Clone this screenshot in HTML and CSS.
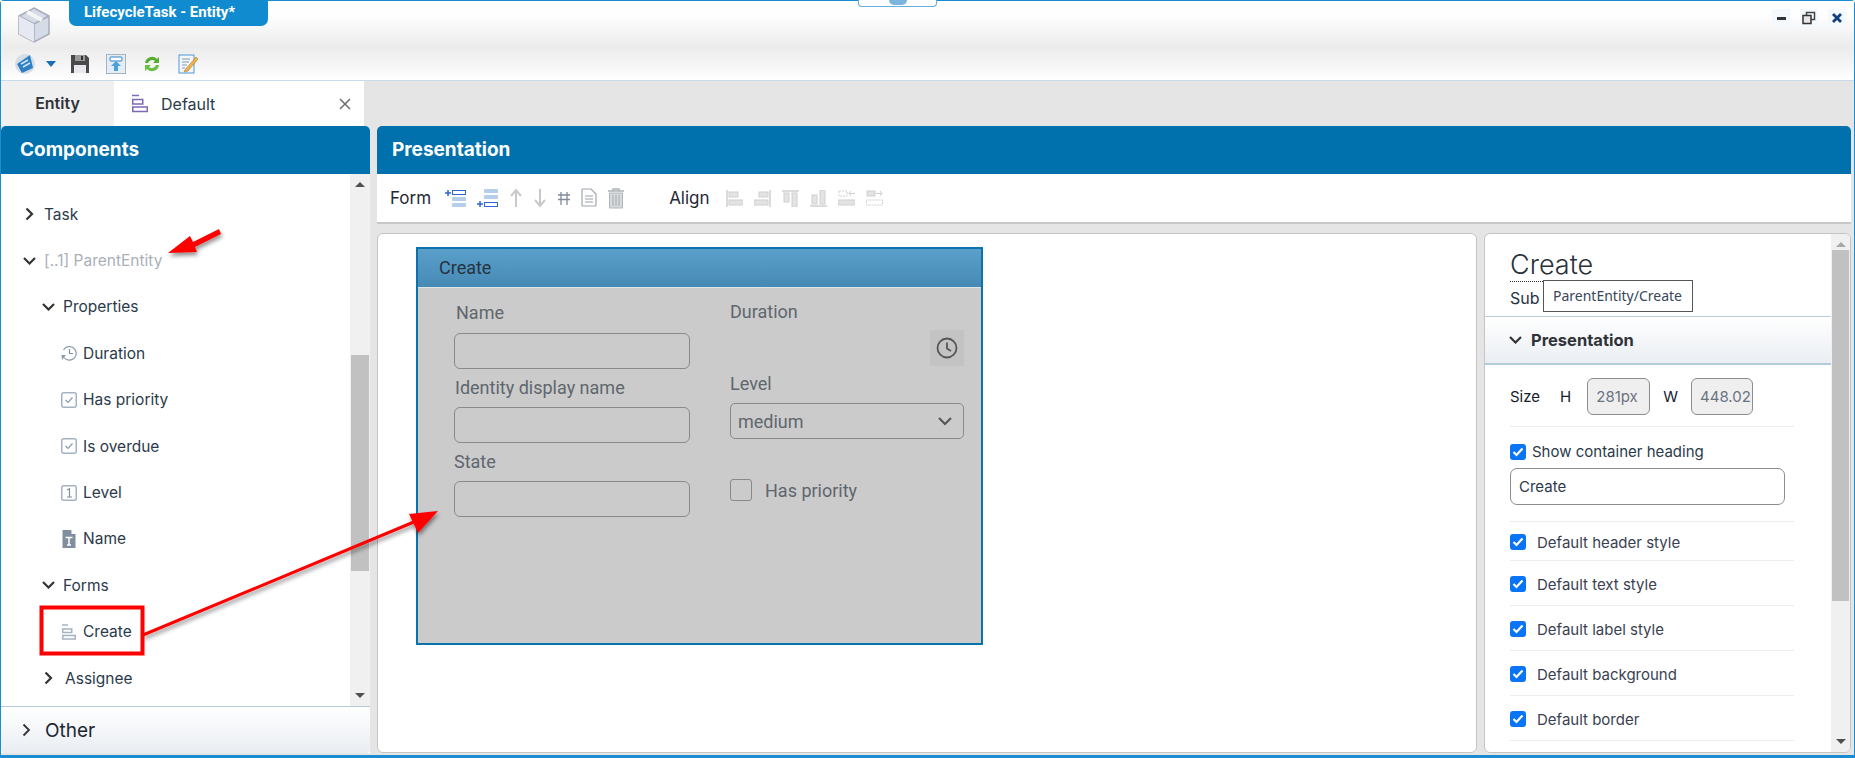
FILE: index.html
```html
<!DOCTYPE html>
<html lang="en">
<head>
    <meta charset="UTF-8">
    <title>LifecycleTask - Entity</title>
    <link rel="stylesheet" href="styles.css">
</head>
<body>
<div class="window">

    <!-- Title bar -->
    <div class="titlebar">
        <div class="title-row">
            <svg class="app-logo" width="34" height="38" viewBox="0 0 34 38">
                <path d="M17 2 L32 10 L32 28 L17 36 L2 28 L2 10 Z" fill="#d5dce8" stroke="#a7acb8" stroke-width="1.5"/>
                <path d="M2 10 L17 18 L32 10 M17 18 L17 36" fill="none" stroke="#a7acb8" stroke-width="1.5"/>
                <path d="M2 10 L17 18 L17 36 L2 28 Z" fill="#e6e9f2"/>
                <path d="M10 6 L25 14" stroke="#f5f5f5" stroke-width="4"/>
            </svg>
            <div class="title-tab">LifecycleTask - Entity*</div>
            <div class="top-handle"><span></span></div>
            <div class="window-btns">
                <span class="win-btn"><svg width="12" height="12" viewBox="0 0 12 12"><rect x="2" y="5" width="9" height="3" fill="#333"/></svg></span>
                <span class="win-btn"><svg width="14" height="14" viewBox="0 0 14 14"><rect x="4.5" y="1.5" width="8" height="7" fill="none" stroke="#444" stroke-width="1.5"/><rect x="1" y="4.5" width="8" height="8" fill="#e8e8e8" stroke="#333" stroke-width="1.5"/></svg></span>
                <span class="win-btn"><svg width="12" height="12" viewBox="0 0 12 12"><path d="M2 2 L10 10 M10 2 L2 10" stroke="#123f80" stroke-width="2.8"/></svg></span>
            </div>
        </div>
        <div class="quick-tools">
            <svg class="tool-sphere" width="22" height="22" viewBox="0 0 22 22"><circle cx="11" cy="11" r="10" fill="#d4dde6"/><path d="M3 11 L16 2 L19 15 L8 20 Z" fill="#2f7fc4"/><path d="M7 11 L14 7 M9 14 L16 10" stroke="#cfe4f5" stroke-width="1.5"/></svg>
            <svg class="tool-caret" width="10" height="6" viewBox="0 0 10 6"><path d="M0 0 H10 L5 6 Z" fill="#1a6fb5"/></svg>
            <svg width="20" height="20" viewBox="0 0 20 20"><path d="M1 1 H16 L19 4 V19 H1 Z" fill="#4a4a4a"/><rect x="5" y="1" width="10" height="6" fill="#9a9a9a"/><rect x="11" y="2" width="2" height="4" fill="#333"/><rect x="4" y="11" width="12" height="8" fill="#e8e8ee"/></svg>
            <svg width="20" height="20" viewBox="0 0 20 20"><rect x="0.5" y="0.5" width="19" height="19" fill="#e4edf5" stroke="#a9b3bd"/><rect x="4" y="3" width="12" height="4" rx="1" fill="#fff" stroke="#2c83c9"/><path d="M10 7 L15 12 H12 V17 H8 V12 H5 Z" fill="#49a0de"/></svg>
            <svg width="20" height="20" viewBox="0 0 20 20"><path d="M3 9 A7 7 0 0 1 15 5 L17 3 V9 H11 L13 7 A4.500 4.500 0 0 0 6 9 Z" fill="#57ad32"/><path d="M17 11 A7 7 0 0 1 5 15 L3 17 V11 H9 L7 13 A4.500 4.500 0 0 0 14 11 Z" fill="#6cc043"/></svg>
            <svg width="21" height="20" viewBox="0 0 21 20"><rect x="1" y="1" width="15" height="18" fill="#f2f7fc" stroke="#4d9ad6"/><path d="M4 5 H12 M4 8 H11 M4 11 H9 M4 14 H7" stroke="#8a97a5"/><path d="M7 16 L18 3 L20 5 L10 17 L6 18 Z" fill="#eeb44b" stroke="#b5762a" stroke-width="0.6"/></svg>
        </div>
    </div>

    <!-- Tabs -->
    <div class="tabs">
        <div class="tab-entity">Entity</div>
        <div class="tab-default">
            <svg class="form-icon" width="16" height="19" viewBox="0 0 16 19"><g fill="none" stroke="#7f68b5" stroke-width="1.5"><path d="M0 1.500 H7"/><rect x="0.750" y="5.500" width="10" height="4.500"/><rect x="0.750" y="13" width="14.500" height="4.500"/></g></svg>
            <span>Default</span>
            <svg class="tab-close" width="12" height="12" viewBox="0 0 12 12"><path d="M1 1 L11 11 M11 1 L1 11" stroke="#6d6d6d" stroke-width="1.500"/></svg>
        </div>
    </div>

    <div class="workspace">

        <!-- Components panel -->
        <div class="components">
            <div class="panel-head">Components</div>
            <div class="tree-wrap">
                <div class="tree">
                    <div class="tree-row lvl-0"><svg class="chev" width="9" height="14" viewBox="0 0 9 14"><path d="M1.500 1.500 L7 7 L1.500 12.500" fill="none" stroke="#333" stroke-width="2.200"/></svg>Task</div>
                    <div class="tree-row lvl-0 muted"><svg class="chev-down" width="13" height="8" viewBox="0 0 13 8"><path d="M1 1 L6.500 6.500 L12 1" fill="none" stroke="#333" stroke-width="2.200"/></svg>[..1] ParentEntity</div>
                    <div class="tree-row lvl-1"><svg class="chev-down" width="13" height="8" viewBox="0 0 13 8"><path d="M1 1 L6.500 6.500 L12 1" fill="none" stroke="#333" stroke-width="2.200"/></svg>Properties</div>
                    <div class="tree-row lvl-2">
                        <svg class="prop-icon" width="16" height="16" viewBox="0 0 16 16"><path d="M2.500 5 A6.800 6.800 0 1 1 3 12.500" fill="none" stroke="#8b9bab" stroke-width="1.200"/><path d="M8.500 4 V8.500 H12" fill="none" stroke="#7f8f9f" stroke-width="1.200"/><path d="M0.500 10 H5 L1 15 Z" fill="#8b9bab"/></svg>
                        Duration</div>
                    <div class="tree-row lvl-2">
                        <svg class="prop-icon" width="16" height="16" viewBox="0 0 16 16"><rect x="0.750" y="0.750" width="14.500" height="14.500" rx="2" fill="none" stroke="#a3b3c2" stroke-width="1.500"/><path d="M4.500 8 L7 10.500 L11.500 5.500" fill="none" stroke="#8b9bab" stroke-width="1.200"/></svg>
                        Has priority</div>
                    <div class="tree-row lvl-2">
                        <svg class="prop-icon" width="16" height="16" viewBox="0 0 16 16"><rect x="0.750" y="0.750" width="14.500" height="14.500" rx="2" fill="none" stroke="#a3b3c2" stroke-width="1.500"/><path d="M4.500 8 L7 10.500 L11.500 5.500" fill="none" stroke="#8b9bab" stroke-width="1.200"/></svg>
                        Is overdue</div>
                    <div class="tree-row lvl-2">
                        <svg class="prop-icon" width="16" height="16" viewBox="0 0 16 16"><rect x="0.750" y="0.750" width="14.500" height="14.500" rx="2" fill="none" stroke="#a3b3c2" stroke-width="1.500"/><path d="M6 5 L8.500 3.800 V12 M6 12 H11" fill="none" stroke="#7f8f9f" stroke-width="1.200"/></svg>
                        Level</div>
                    <div class="tree-row lvl-2">
                        <svg class="prop-icon" width="14" height="18" viewBox="0 0 14 18"><path d="M0.500 0 H9 L13.500 4.500 V18 H0.500 Z" fill="#7f8f9f"/><path d="M9.500 0 L13.500 4 H9.500 Z" fill="#fff"/><path d="M3.500 7.500 H10.500 M7 7.500 V15 M5 15 H9" stroke="#fff" stroke-width="1.500"/></svg>
                        Name</div>
                    <div class="tree-row lvl-1"><svg class="chev-down" width="13" height="8" viewBox="0 0 13 8"><path d="M1 1 L6.500 6.500 L12 1" fill="none" stroke="#333" stroke-width="2.200"/></svg>Forms</div>
                    <div class="tree-row lvl-2 marked">
                        <svg class="prop-icon" width="14" height="16" viewBox="0 0 14 16"><g fill="none" stroke="#a3b3c2" stroke-width="1.500"><path d="M0 1 H6"/><rect x="0.750" y="5" width="9" height="3.500"/><rect x="0.750" y="11.500" width="12.500" height="3.500"/></g></svg>
                        Create</div>
                    <div class="tree-row lvl-1"><svg class="chev" width="9" height="14" viewBox="0 0 9 14"><path d="M1.500 1.500 L7 7 L1.500 12.500" fill="none" stroke="#333" stroke-width="2.200"/></svg>Assignee</div>
                </div>
                <div class="scrollbar">
                    <div class="arrow-up"></div>
                    <div class="thumb-track"><div class="thumb thumb-tree"></div></div>
                    <div class="arrow-down"></div>
                </div>
            </div>
            <div class="other-row"><svg width="9" height="14" viewBox="0 0 9 14"><path d="M1.500 1.500 L7 7 L1.500 12.500" fill="none" stroke="#333" stroke-width="1.800"/></svg>Other</div>
        </div>

        <!-- Presentation panel -->
        <div class="presentation">
            <div class="pres-top">
                <div class="panel-head pres-head">Presentation</div>
                <div class="toolbar">
                    <span class="tool-label">Form</span>
                    <div class="tool-group">
                        <svg width="22" height="20" viewBox="0 0 22 20"><path d="M0 5 H6 M3 2 V8" stroke="#2f63d6" stroke-width="1.500"/><rect x="7.500" y="2.500" width="13" height="4" fill="#fff" stroke="#2f63d6"/><rect x="7" y="9" width="14" height="4" rx="1" fill="#b6cfe8"/><rect x="7" y="15" width="14" height="4" rx="1" fill="#b6cfe8"/></svg>
                        <svg width="22" height="20" viewBox="0 0 22 20"><rect x="7" y="1" width="14" height="4" rx="1" fill="#b6cfe8"/><rect x="7" y="7" width="14" height="4" rx="1" fill="#b6cfe8"/><rect x="7.500" y="14.500" width="13" height="4" fill="#fff" stroke="#2f63d6"/><path d="M0 16 H6 M3 13 V19" stroke="#2f63d6" stroke-width="1.500"/></svg>
                        <svg width="14" height="20" viewBox="0 0 14 20"><path d="M7 19 V3 M2 8 L7 2 L12 8" fill="none" stroke="#c9c9c9" stroke-width="2"/></svg>
                        <svg width="14" height="20" viewBox="0 0 14 20"><path d="M7 1 V17 M2 12 L7 18 L12 12" fill="none" stroke="#c9c9c9" stroke-width="2"/></svg>
                        <svg width="14" height="20" viewBox="0 0 14 20"><path d="M4 4 V17 M10 4 V17 M1 7 H13 M1 11.500 H13" stroke="#7f8a9a" stroke-width="1.300"/></svg>
                        <svg width="16" height="20" viewBox="0 0 16 20"><path d="M1 2 Q1 1 2 1 H10 L15 6 V17 Q15 18 14 18 H2 Q1 18 1 17 Z" fill="#fff" stroke="#a0a6ae" stroke-width="1.200"/><path d="M4 8 H12 M4 11 H12 M4 14 H12" stroke="#9aa0a8"/></svg>
                        <svg width="18" height="21" viewBox="0 0 18 21"><path d="M1 3 H17 M6 3 V1 H12 V3" fill="none" stroke="#adb3b8" stroke-width="1.500"/><path d="M2.500 5 H15.500 V20 H2.500 Z" fill="#d7d9dc" stroke="#b1b6bb"/><path d="M6 7 V18 M9 7 V18 M12 7 V18" stroke="#a7acb1"/></svg>
                    </div>
                    <span class="tool-label tool-label-align">Align</span>
                    <div class="tool-group align-group">
                        <svg width="17" height="17" viewBox="0 0 17 17"><path d="M1 0 V17" stroke="#cfcfcf" stroke-width="1.500"/><rect x="3" y="2" width="9" height="5" fill="#e3e3e3" stroke="#d0d0d0"/><rect x="3" y="10" width="14" height="5" fill="#e3e3e3" stroke="#d0d0d0"/></svg>
                        <svg width="17" height="17" viewBox="0 0 17 17"><path d="M16 0 V17" stroke="#cfcfcf" stroke-width="1.500"/><rect x="5" y="2" width="9" height="5" fill="#e3e3e3" stroke="#d0d0d0"/><rect x="0" y="10" width="14" height="5" fill="#e3e3e3" stroke="#d0d0d0"/></svg>
                        <svg width="17" height="17" viewBox="0 0 17 17"><path d="M0 1 H17" stroke="#cfcfcf" stroke-width="1.500"/><rect x="2" y="3" width="5" height="9" fill="#e3e3e3" stroke="#d0d0d0"/><rect x="10" y="3" width="5" height="14" fill="#e3e3e3" stroke="#d0d0d0"/></svg>
                        <svg width="17" height="17" viewBox="0 0 17 17"><path d="M0 16 H17" stroke="#cfcfcf" stroke-width="1.500"/><rect x="2" y="5" width="5" height="9" fill="#e3e3e3" stroke="#d0d0d0"/><rect x="10" y="0" width="5" height="14" fill="#e3e3e3" stroke="#d0d0d0"/></svg>
                        <svg width="17" height="17" viewBox="0 0 17 17"><rect x="1" y="1" width="8" height="5" fill="none" stroke="#d0d0d0" stroke-dasharray="2 1"/><path d="M11 3.500 H17 M13 1 L11 3.500 L13 6" fill="none" stroke="#cfcfcf"/><rect x="0" y="10" width="17" height="5" fill="#e3e3e3" stroke="#d0d0d0"/></svg>
                        <svg width="17" height="17" viewBox="0 0 17 17"><rect x="1" y="1" width="8" height="5" fill="#e3e3e3" stroke="#d0d0d0"/><path d="M10 3.500 H16 M14 1 L16 3.500 L14 6" fill="none" stroke="#cfcfcf"/><rect x="0.500" y="10" width="16" height="5" fill="none" stroke="#d0d0d0" stroke-dasharray="2 1"/></svg>
                    </div>
                </div>
            </div>

            <div class="pres-bottom">
                <!-- Canvas with the selected form -->
                <div class="canvas">
                    <div class="form-card">
                        <div class="form-head">Create</div>
                        <div class="form-body">
                            <div class="form-col">
                                <label class="f-label f-name">Name</label>
                                <div class="f-input"></div>
                                <label class="f-label f-identity">Identity display name</label>
                                <div class="f-input"></div>
                                <label class="f-label f-state">State</label>
                                <div class="f-input"></div>
                            </div>
                            <div class="form-col col-right">
                                <label class="f-label f-duration">Duration</label>
                                <div class="clock-row">
                                    <span class="clock-btn"><svg width="22" height="22" viewBox="0 0 22 22"><circle cx="11" cy="11" r="9.500" fill="none" stroke="#555" stroke-width="1.800"/><path d="M11 5.500 V11.500 L15 14" fill="none" stroke="#555" stroke-width="1.800"/></svg></span>
                                </div>
                                <label class="f-label f-level">Level</label>
                                <div class="f-select">medium<svg width="14" height="9" viewBox="0 0 14 9"><path d="M1 1 L7 7 L13 1" fill="none" stroke="#555" stroke-width="2"/></svg></div>
                                <div class="f-check"><span class="f-box"></span>Has priority</div>
                            </div>
                        </div>
                    </div>
                </div>

                <!-- Properties of the selected form -->
                <div class="props">
                    <div class="props-scroll">
                        <div class="props-title"><span>Create</span></div>
                        <div class="props-sub">Sub<span class="tooltip">ParentEntity/Create</span></div>
                        <div class="section-head"><svg width="13" height="8" viewBox="0 0 13 8"><path d="M1 1 L6.500 6.500 L12 1" fill="none" stroke="#333" stroke-width="2.200"/></svg>Presentation</div>
                        <div class="section-body">
                            <div class="size-row">
                                <span class="size-word">Size</span>
                                <span class="size-h">H</span>
                                <span class="size-box">281px</span>
                                <span class="size-w">W</span>
                                <span class="size-box size-clip">448.02</span>
                            </div>
                            <div class="heading-row">
                                <div class="check-line"><span class="check"><svg width="12" height="10" viewBox="0 0 12 10"><path d="M1.500 5 L4.500 8 L10.500 1.500" fill="none" stroke="#fff" stroke-width="2.200"/></svg></span>Show container heading</div>
                                <div class="heading-input">Create</div>
                            </div>
                            <div class="opt-row opt-first"><span class="check"><svg width="12" height="10" viewBox="0 0 12 10"><path d="M1.500 5 L4.500 8 L10.500 1.500" fill="none" stroke="#fff" stroke-width="2.200"/></svg></span>Default header style</div>
                            <div class="opt-row"><span class="check"><svg width="12" height="10" viewBox="0 0 12 10"><path d="M1.500 5 L4.500 8 L10.500 1.500" fill="none" stroke="#fff" stroke-width="2.200"/></svg></span>Default text style</div>
                            <div class="opt-row"><span class="check"><svg width="12" height="10" viewBox="0 0 12 10"><path d="M1.500 5 L4.500 8 L10.500 1.500" fill="none" stroke="#fff" stroke-width="2.200"/></svg></span>Default label style</div>
                            <div class="opt-row"><span class="check"><svg width="12" height="10" viewBox="0 0 12 10"><path d="M1.500 5 L4.500 8 L10.500 1.500" fill="none" stroke="#fff" stroke-width="2.200"/></svg></span>Default background</div>
                            <div class="opt-row"><span class="check"><svg width="12" height="10" viewBox="0 0 12 10"><path d="M1.500 5 L4.500 8 L10.500 1.500" fill="none" stroke="#fff" stroke-width="2.200"/></svg></span>Default border</div>
                        </div>
                    </div>
                    <div class="scrollbar props-bar">
                        <div class="arrow-up"></div>
                        <div class="thumb-track"><div class="thumb thumb-props"></div></div>
                        <div class="arrow-down"></div>
                    </div>
                </div>
            </div>
        </div>
    </div>

    <!-- Red annotations drawn over the screenshot -->
    <svg class="annotations" width="1855" height="758" viewBox="0 0 1855 758">
        <defs>
            <filter id="shade" x="-10%" y="-10%" width="120%" height="130%"><feDropShadow dx="1" dy="3" stdDeviation="2" flood-color="#000" flood-opacity="0.45"/></filter>
        </defs>
        <g filter="url(#shade)">
            <path d="M219 229 L193 242 L190 236 L168 253 L197 252 L195 247 L221 234 Z" fill="#f00"/>
            <path d="M143 635 L421 519" stroke="#f00" stroke-width="3" fill="none"/>
            <path d="M438 511 L409 514 L418 533 Z" fill="#f00"/>
        </g>
        <rect x="41.500" y="607.500" width="101" height="46" fill="none" stroke="#f00" stroke-width="4"/>
    </svg>
</div>
</body>
</html>
```

FILE: styles.css
```css
/* Reset default margin/padding */
* {
    margin: 0;
    padding: 0;
    box-sizing: border-box;
}

body {
    width: 1855px;
    height: 758px;
    overflow: hidden;
    font-family: Inter, "Liberation Sans", sans-serif;
    color: #2b3a4a;
}

.window {
    position: relative;
    width: 1855px;
    height: 758px;
    display: flex;
    flex-direction: column;
    background: #e5e5e5;
    border: 1px solid #1a8dd2;
    border-width: 1px 1px 3px 1px;
    border-radius: 4px 4px 0 0;
}

/* Title bar */
.titlebar {
    height: 80px;
    flex: none;
    background: linear-gradient(#fff 0%, #fdfdfd 20%, #ececec 58%, #f0f0f0 70%, #fff 100%);
    border-bottom: 1px solid #c8daea;
}

.title-row {
    position: relative;
    height: 48px;
    display: flex;
}

.app-logo {
    margin: 5px 0 0 16px;
}

.title-tab {
    width: 199px;
    height: 26px;
    margin: -1px 0 0 18px;
    background: #118bd0;
    border-radius: 0 0 7px 7px;
    color: #fff;
    font-family: Roboto, sans-serif;
    font-weight: 700;
    font-size: 15px;
    line-height: 25px;
    padding-left: 15px;
}

.top-handle {
    position: absolute;
    left: 857px;
    top: -1px;
    width: 79px;
    height: 7px;
    background: #fff;
    border: 1px solid #62aedd;
    border-top: none;
    border-radius: 0 0 4px 4px;
    overflow: hidden;
}

.top-handle span {
    display: block;
    width: 18px;
    height: 5px;
    margin: 0 auto;
    background: #7bb4dc;
    border-radius: 0 0 9px 9px;
}

.window-btns {
    margin: 8px 8px 0 auto;
    display: flex;
    gap: 10px;
}

.win-btn {
    width: 18px;
    height: 18px;
    background: #f4f9fd;
    display: flex;
    align-items: center;
    justify-content: center;
}

.quick-tools {
    display: flex;
    align-items: center;
    height: 30px;
    padding-left: 13px;
    gap: 16px;
}

.quick-tools .tool-sphere {
    margin-right: -6px;
}

.tool-caret {
    margin-right: -2px;
}

/* Tabs */
.tabs {
    height: 45px;
    flex: none;
    display: flex;
}

.tab-entity {
    width: 113px;
    background: #f0f0f0;
    font-weight: 600;
    font-size: 16px;
    line-height: 45px;
    text-align: center;
    color: #2f3338;
}

.tab-default {
    width: 250px;
    background: #fff;
    display: flex;
    align-items: center;
    padding-left: 18px;
    font-size: 16px;
}

.form-icon {
    margin-right: 13px;
}

.tab-close {
    margin-left: auto;
    margin-right: 13px;
}

/* Main area */
.workspace {
    flex: 1;
    min-height: 0;
    display: flex;
    gap: 8px;
    padding-bottom: 2px;
}

.panel-head {
    height: 48px;
    flex: none;
    background: #0071ad;
    color: #fff;
    font-weight: 700;
    font-size: 19px;
    line-height: 48px;
    padding-left: 19px;
    border-radius: 5px 5px 0 0;
}

.components {
    width: 369px;
    flex: none;
    background: #fff;
    display: flex;
    flex-direction: column;
    border-right: 0;
    margin-right: -1px;
    border-radius: 5px 5px 0 0;
}

.tree-wrap {
    flex: 1;
    min-height: 0;
    display: flex;
}

.tree {
    flex: 1;
    padding-top: 17px;
    font-size: 15.500px;
}

.tree-row {
    height: 46.400px;
    display: flex;
    align-items: center;
    white-space: nowrap;
}

.lvl-0 { padding-left: 22px; }
.lvl-1 { padding-left: 41px; }
.lvl-2 { padding-left: 60px; }

.tree-row .chev {
    margin: 0 10px 0 2px;
}

.tree-row .chev-down {
    margin-right: 8px;
}

.lvl-1 .chev {
    margin-right: 12px;
}

.prop-icon {
    width: 16px;
    margin-right: 6px;
}

.muted {
    color: #a9b0b8;
}

.scrollbar {
    width: 20px;
    flex: none;
    background: #f0f0f0;
    display: flex;
    flex-direction: column;
    align-items: center;
}

.arrow-up, .arrow-down {
    flex: none;
    width: 0;
    height: 0;
    border-left: 5px solid transparent;
    border-right: 5px solid transparent;
}

.arrow-up {
    margin: 8px 0 5px;
    border-bottom: 5px solid #505050;
}

.arrow-down {
    margin: 5px 0 8px;
    border-top: 5px solid #505050;
}

.thumb-track {
    flex: 1;
    width: 100%;
    min-height: 0;
}

.thumb {
    width: 18px;
    margin: 0 auto;
    background: #c1c1c1;
}

.thumb-tree {
    height: 216px;
    margin-top: 163px;
}

.other-row {
    height: 47px;
    flex: none;
    border-top: 1px solid #b5cadc;
    background: linear-gradient(#fff, #e9edf2);
    display: flex;
    align-items: center;
    gap: 14px;
    padding-left: 21px;
    font-size: 19px;
    color: #1c2733;
    border-radius: 0 0 4px 4px;
}

/* Presentation panel */
.presentation {
    flex: 1;
    min-width: 0;
    display: flex;
    flex-direction: column;
    gap: 9px;
    padding-right: 3px;
}

.pres-top {
    background: #fff;
    border-radius: 5px 5px 0 0;
    border-bottom: 2px solid #c8c8c8;
}

.pres-head {
    font-size: 19px;
    padding-left: 15px;
}

.toolbar {
    height: 48px;
    display: flex;
    align-items: center;
    padding-left: 13px;
}

.tool-label {
    font-size: 17px;
    color: #1f2a36;
}

.tool-label-align {
    margin-left: 44px;
}

.tool-group {
    display: flex;
    align-items: center;
    gap: 10px;
    margin-left: 14px;
}

.align-group {
    gap: 11px;
    margin-left: 16px;
}

.pres-bottom {
    flex: 1;
    min-height: 0;
    display: flex;
    gap: 7px;
}

.canvas {
    flex: 1;
    min-width: 0;
    background: #fff;
    border: 1px solid #c4c4c4;
    border-radius: 6px;
    padding: 13px 0 0 38px;
}

/* Form preview */
.form-card {
    width: 567px;
    height: 398px;
    background: #cbcbcb;
    border: 2px solid #0a73ad;
    font-family: Roboto, sans-serif;
    color: #5f666d;
    font-size: 18px;
}

.form-head {
    height: 39px;
    background: linear-gradient(#5aa0ca, #4689b5);
    border-bottom: 1px solid #dfe6ea;
    color: #27333d;
    line-height: 38px;
    padding-left: 21px;
}

.form-body {
    display: flex;
    padding-left: 36px;
}

.form-col {
    width: 276px;
    display: flex;
    flex-direction: column;
}

.col-right {
    width: 234px;
    margin-left: 0;
}

.f-label {
    display: block;
    line-height: 22px;
}

.f-name { margin: 14px 0 9px 2px; }
.f-identity { margin: 8px 0 8px 1px; }
.f-state { margin: 8px 0 8px 0; }
.f-duration { margin: 13px 0 0 0; }
.f-level { margin: 7px 0 8px 0; }

.f-input {
    width: 236px;
    height: 36px;
    border: 1px solid #8a8a8a;
    border-radius: 6px;
}

.clock-row {
    height: 36px;
    margin-top: 7px;
    display: flex;
    justify-content: flex-end;
    padding-right: 0;
}

.clock-btn {
    width: 34px;
    height: 36px;
    background: #c3c3c3;
    display: flex;
    align-items: center;
    justify-content: center;
}

.f-select {
    height: 36px;
    border: 1px solid #8a8a8a;
    border-radius: 5px;
    display: flex;
    align-items: center;
    justify-content: space-between;
    padding: 0 11px 0 7px;
}

.f-check {
    display: flex;
    align-items: center;
    margin-top: 40px;
}

.f-box {
    width: 22px;
    height: 22px;
    border: 1px solid #8a8a8a;
    border-radius: 3px;
    margin-right: 13px;
}

/* Properties column */
.props {
    width: 367px;
    flex: none;
    background: #fff;
    border: 1px solid #c4c4c4;
    border-radius: 6px;
    display: flex;
    overflow: hidden;
}

.props-scroll {
    flex: 1;
    min-width: 0;
}

.props-bar {
    width: 19px;
}

.props-bar .arrow-up {
    border-bottom-color: #a8a8a8;
    margin-bottom: 3px;
}

.props-bar .thumb {
    width: 17px;
}

.thumb-props {
    height: 351px;
    margin-top: 0;
}

.props-title {
    padding: 14px 0 0 25px;
    font-size: 27px;
    line-height: 33px;
    font-weight: 300;
    color: #2b3138;
}

.props-title span {
    display: inline-block;
    border-bottom: 1px dotted #333;
    height: 34px;
}

.props-sub {
    position: relative;
    height: 34px;
    padding: 5px 0 0 25px;
    font-size: 16px;
    line-height: 22px;
    color: #27333f;
}

.tooltip {
    position: absolute;
    left: 58px;
    top: -2px;
    width: 150px;
    height: 32px;
    background: #fff;
    border: 1px solid #555;
    font-size: 14px;
    line-height: 30px;
    padding-left: 9px;
    white-space: nowrap;
    color: #37465a;
    font-family: "Noto Sans", sans-serif;
}

.section-head {
    height: 49px;
    border-top: 1px solid #b9cddc;
    border-bottom: 2px solid #b3cbdb;
    background: linear-gradient(#fff, #eaeef3);
    display: flex;
    align-items: center;
    gap: 9px;
    padding-left: 24px;
    font-weight: 700;
    font-size: 16.500px;
    color: #2f3338;
}

.section-body {
    padding: 0 37px 0 25px;
    font-size: 15px;
}

.size-row {
    height: 62px;
    display: flex;
    align-items: center;
    border-bottom: 1px solid #ececec;
    color: #14202c;
    padding-top: 2px;
}

.size-h { margin-left: 20px; }
.size-w { margin-left: 13px; }

.size-box {
    width: 63px;
    height: 37px;
    margin-left: 16px;
    border: 1px solid #8c8c8c;
    border-radius: 6px;
    background: #efefef;
    color: #6b7280;
    line-height: 35px;
    padding-left: 8px;
    overflow: hidden;
}

.size-clip {
    width: 62px;
    margin-left: 13px;
}

.heading-row {
    height: 95px;
    border-bottom: 1px solid #ececec;
    padding-top: 15px;
}

.check-line {
    display: flex;
    align-items: center;
    gap: 6px;
    font-size: 15px;
}

.check {
    width: 16px;
    height: 16px;
    flex: none;
    background: #0a74f6;
    border-radius: 3px;
    display: flex;
    align-items: center;
    justify-content: center;
}

.heading-input {
    width: 275px;
    height: 37px;
    margin-top: 7px;
    border: 1px solid #8c8c8c;
    border-radius: 7px;
    line-height: 35px;
    padding-left: 8px;
}

.opt-row {
    height: 45px;
    display: flex;
    align-items: center;
    gap: 11px;
    border-bottom: 1px solid #ececec;
    color: #3a3f52;
    padding-top: 2px;
}

.opt-first {
    height: 39px;
}

/* Annotation layer */
.annotations {
    position: absolute;
    left: -1px;
    top: -1px;
    pointer-events: none;
}
```
